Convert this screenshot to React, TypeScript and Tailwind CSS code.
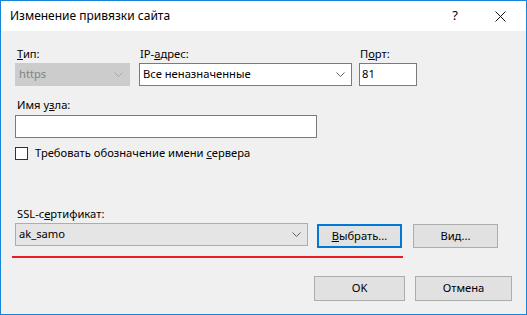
import React from 'react';

const FONT = { fontFamily: '"Noto Sans", "Open Sans", sans-serif' };

function Chevron({ color = '#606060' }: { color?: string }) {
  return (
    <svg width="9" height="5" viewBox="0 0 9 5" className="shrink-0">
      <polyline points="0.5,0.5 4.5,4.5 8.5,0.5" fill="none" stroke={color} strokeWidth="1" />
    </svg>
  );
}

function Label({ children, className = '' }: { children: React.ReactNode; className?: string }) {
  return <div className={`h-[15px] text-[11.2px] leading-[15px] text-black ${className}`}>{children}</div>;
}

function Combo({ value, width, disabled = false, grey = false }: { value: string; width: string; disabled?: boolean; grey?: boolean }) {
  const look = disabled
    ? 'bg-[#cccccc] border-[#cccccc] text-[#838383]'
    : grey
      ? 'bg-[#e5e5e5] border-[#adadad] text-black'
      : 'bg-white border-[#7a7a7a] text-black';
  return (
    <div className={`${width} h-[23px] border ${look} flex items-center pl-[3px] pr-[6px] text-[11.2px]`}>
      <span className="flex-1 truncate">{value}</span>
      <Chevron color={disabled ? '#a8a8a8' : '#606060'} />
    </div>
  );
}

function Button({ children, width, height = 'h-[24px]', primary = false }: { children: React.ReactNode; width: string; height?: string; primary?: boolean }) {
  return (
    <div
      className={`${width} ${height} flex items-center justify-center text-[11.2px] text-black bg-[#e1e1e1] ${
        primary ? 'border-2 border-[#0078d7]' : 'border border-[#adadad]'
      }`}
    >
      {children}
    </div>
  );
}

export default function App() {
  return (
    <div style={FONT} className="w-[527px] h-[315px] border border-[#1883d7] bg-[#f0f0f0] flex flex-col overflow-hidden">
      {/* title bar */}
      <div className="h-[30px] bg-white flex items-center pl-[9px] text-[12px] text-black shrink-0">
        <span className="flex-1">Изменение привязки сайта</span>
        <span className="w-[20px] text-center text-[13px] mr-[30px]">?</span>
        <svg width="11" height="11" viewBox="0 0 11 11" className="mr-[20px]">
          <path d="M0.5 0.5 L10.5 10.5 M10.5 0.5 L0.5 10.5" stroke="#111" strokeWidth="1" />
        </svg>
      </div>

      <div className="flex flex-col pl-[14px] pr-[14px]">
        {/* type / ip / port */}
        <div className="flex mt-[15px]">
          <div className="flex flex-col w-[115px]">
            <Label className="pl-[2px]"><span className="underline">Т</span>ип:</Label>
            <div className="mt-[2px]">
              <Combo value="https" width="w-[115px]" disabled />
            </div>
          </div>
          <div className="flex flex-col w-[213px] ml-[9px]">
            <Label className="pl-[1px]">IP-<span className="underline">а</span>дрес:</Label>
            <div className="mt-[2px]">
              <Combo value="Все неназначенные" width="w-[213px]" />
            </div>
          </div>
          <div className="flex flex-col w-[58px] ml-[7px]">
            <Label className="pl-[1px]">П<span className="underline">о</span>рт:</Label>
            <div className="mt-[2px] w-[58px] h-[23px] bg-white border border-[#7a7a7a] flex items-center pl-[2px] text-[11.2px] text-black">
              81
            </div>
          </div>
        </div>

        {/* host name */}
        <Label className="mt-[11px] pl-[2px]">Имя у<span className="underline">з</span>ла:</Label>
        <div className="mt-[3px] w-[302px] h-[23px] bg-white border border-[#7a7a7a]" />

        {/* SNI checkbox */}
        <div className="mt-[8px] flex items-center h-[14px]">
          <div className="w-[13px] h-[13px] bg-white border border-[#333333]" />
          <span className="ml-[7px] text-[11.2px] leading-[14px] text-black">
            Требовать обозначение имени <span className="underline">с</span>ервера
          </span>
        </div>

        {/* ssl */}
        <Label className="mt-[46px] pl-[2px]">SSL-с<span className="underline">е</span>ртификат:</Label>
        <div className="flex items-start mt-[2px]">
          <Combo value="ak_samo" width="w-[293px]" grey />
          <div className="ml-[9px] mt-[1px]">
            <Button width="w-[85px]" primary>
              <span className="underline">В</span>ыбрать...
            </Button>
          </div>
          <div className="ml-[11px] mt-[1px]">
            <Button width="w-[85px]">Вид...</Button>
          </div>
        </div>

        {/* annotation */}
        <div className="mt-[8px] -ml-[3px] w-[391px] h-[2px] bg-[#ed1c24]" />

        {/* footer */}
        <div className="flex justify-end mt-[18px]">
          <Button width="w-[91px]" height="h-[25px]">OK</Button>
          <div className="ml-[10px]">
            <Button width="w-[97px]" height="h-[25px]">Отмена</Button>
          </div>
        </div>
      </div>
    </div>
  );
}
